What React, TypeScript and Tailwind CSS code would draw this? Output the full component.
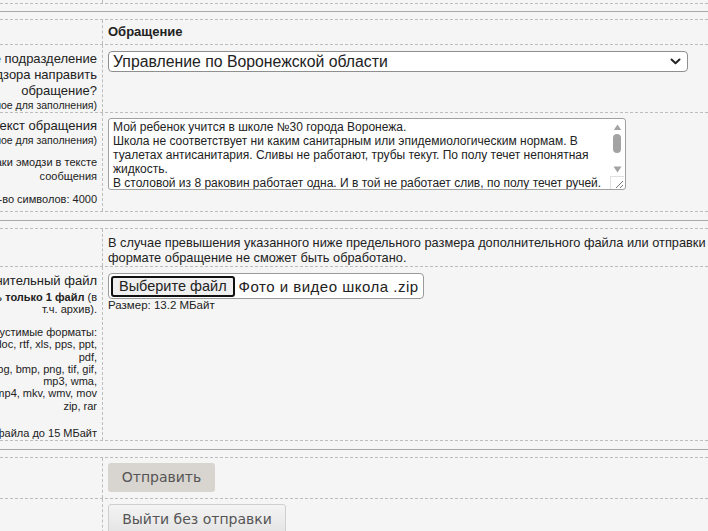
import React from 'react';

const dash = 'border-dashed border-[#bdbdbd]';

function Row({ left, children, className = '' }: { left?: React.ReactNode; children?: React.ReactNode; className?: string }) {
  return (
    <div className={`flex border-b ${dash} ${className}`}>
      <div className={`w-[103px] shrink-0 border-r ${dash} overflow-hidden flex flex-col items-end pr-[5px] text-[#222]`}>
        {left}
      </div>
      <div className="flex-1 pl-[5px] min-w-0">{children}</div>
    </div>
  );
}

function Line({ children, className = '' }: { children: React.ReactNode; className?: string }) {
  return <div className={`whitespace-nowrap ${className}`}>{children}</div>;
}

function Separator({ tall }: { tall?: boolean }) {
  return (
    <div className={`${tall ? 'h-[16px]' : 'h-[15px]'} flex items-center`}>
      <div className="h-px w-full bg-[#a8a8a8]" />
    </div>
  );
}

export default function App() {
  return (
    <div className="w-[708px] h-[531px] overflow-hidden bg-[#f5f5f5] font-['Liberation_Sans',Arial,sans-serif] text-[#222]">
      <Row className="h-[4px]" />
      <Separator />

      <div className={`border-t ${dash}`}>
        <Row className="h-[25px]">
          <div className="pt-[4px] text-[13px] font-bold leading-[15px]">Обращение</div>
        </Row>

        <Row className="h-[68px]" left={
          <div className="pt-[6px] flex flex-col items-end">
            <Line className="text-[13px] leading-[16px]">В какое подразделение</Line>
            <Line className="text-[13px] leading-[16px]">Роспотребнадзора направить</Line>
            <Line className="text-[13px] leading-[16px]">обращение?</Line>
            <Line className="text-[10.5px] leading-[12px]">(обязательное для заполнения)</Line>
          </div>
        }>
          <div className="pt-[6px]">
            <div className="w-[580px] h-[21px] rounded-[4px] border border-[#8f8f8f] bg-white flex items-center justify-between pl-[4px] pr-[6px]">
              <span className="text-[15.8px] leading-[17px]">Управление по Воронежской области</span>
              <svg width="11" height="7" viewBox="0 0 11 7" fill="none">
                <path d="M1.5 1.5 L5.5 5.2 L9.5 1.5" stroke="#222" strokeWidth="2" strokeLinecap="round" strokeLinejoin="round" />
              </svg>
            </div>
          </div>
        </Row>

        <Row className="h-[99px]" left={
          <div className="pt-[5px] flex flex-col items-end">
            <Line className="text-[13px] leading-[16px]">Текст обращения</Line>
            <Line className="text-[10.5px] leading-[12px]">(обязательное для заполнения)</Line>
            <Line className="text-[11px] leading-[14px] mt-[9px]">Не используйте знаки эмодзи в тексте</Line>
            <Line className="text-[11px] leading-[14px]">сообщения</Line>
            <Line className="text-[11px] leading-[14px] mt-[9px]">Максимальное кол-во символов: 4000</Line>
          </div>
        }>
          <div className="pt-[5px]">
            <div className="w-[518px] h-[72px] rounded-[3px] border border-[#a0a0a0] bg-white flex">
              <div className="flex-1 overflow-hidden pl-[4px] pt-[1px] text-[12px] leading-[14px] text-[#222]">
                Мой ребенок учится в школе №30 города Воронежа.<br />
                Школа не соответствует ни каким санитарным или эпидемиологическим нормам. В туалетах антисанитария. Сливы не работают, трубы текут. По полу течет непонятная жидкость.<br />
                В столовой из 8 раковин работает одна. И в той не работает слив, по полу течет ручей.
              </div>
              <div className="w-[16px] flex flex-col items-center pt-[5px]">
                <svg width="9" height="7" viewBox="0 0 9 7"><path d="M0.5 6.5 L4.5 0.5 L8.5 6.5 Z" fill="#a3a3a3" /></svg>
                <div className="mt-[4px] w-[8px] h-[20px] rounded-full bg-[#a3a3a3]" />
                <div className="mt-[13px]">
                  <svg width="9" height="7" viewBox="0 0 9 7"><path d="M0.5 0.5 L4.5 6.5 L8.5 0.5 Z" fill="#a3a3a3" /></svg>
                </div>
                <div className="mt-[3px] w-[14px] h-[13px] border-t border-l border-[#e0e0e0]">
                  <svg width="14" height="13" viewBox="0 0 14 13"><path d="M5 11 L12 4 M9 11 L12 8" stroke="#777" strokeWidth="1" /></svg>
                </div>
              </div>
            </div>
          </div>
        </Row>
      </div>

      <Separator tall />

      <div className={`border-t ${dash}`}>
        <Row className="h-[38px]">
          <div className="pt-[6px] text-[12.8px] leading-[15px] whitespace-nowrap">
            В случае превышения указанного ниже предельного размера дополнительного файла или отправки<br />
            формате обращение не сможет быть обработано.
          </div>
        </Row>

        <Row className="h-[174px]" left={
          <div className="pt-[6px] flex flex-col items-end">
            <Line className="text-[13px] leading-[16px]">Дополнительный файл</Line>
            <Line className="text-[11px] leading-[12px] mt-[2px]">Можно прикрепить <b>только 1 файл</b> (в</Line>
            <Line className="text-[11px] leading-[12px]">т.ч. архив).</Line>
            <div className="mt-[11px] flex flex-col items-end text-[11px] leading-[12.3px]">
              <Line>Допустимые форматы:</Line>
              <Line>txt, doc, rtf, xls, pps, ppt,</Line>
              <Line>pdf,</Line>
              <Line>jpg, bmp, png, tif, gif,</Line>
              <Line>mp3, wma,</Line>
              <Line>avi, mp4, mkv, wmv, mov</Line>
              <Line>zip, rar</Line>
            </div>
            <Line className="text-[11px] leading-[14px] mt-[14px]">Размер файла до 15 МБайт</Line>
          </div>
        }>
          <div className="pt-[6px]">
            <div className="w-[316px] h-[26px] rounded-[4px] border border-[#9a9a9a] bg-white flex items-center pl-[2px]">
              <div className="h-[21px] px-[6px] rounded-[3px] border-2 border-[#111] bg-[#efefef] flex items-center text-[14.5px] leading-[17px]">Выберите файл</div>
              <span className="ml-[4px] text-[15px] leading-[17px] tracking-[0.5px]">Фото и видео школа .zip</span>
            </div>
            <div className="text-[11.5px] leading-[13px]">Размер: 13.2 МБайт</div>
          </div>
        </Row>
      </div>

      <Separator tall />

      <div className={`border-t ${dash}`}>
        <Row className="h-[41px]">
          <div className="pt-[5px]">
            <div className="w-[107px] h-[29px] rounded-[3px] bg-[#d8d4cf] flex items-center justify-center font-['DejaVu_Sans',Verdana,sans-serif] text-[14px] text-[#555]">Отправить</div>
          </div>
        </Row>
        <Row className="h-[40px]">
          <div className="pt-[5px]">
            <div className="w-[178px] h-[30px] rounded-[3px] border border-[#cfcfcf] bg-gradient-to-b from-[#f4f4f4] to-[#e4e4e4] flex items-center justify-center font-['DejaVu_Sans',Verdana,sans-serif] text-[14px] text-[#555]">Выйти без отправки</div>
          </div>
        </Row>
      </div>
    </div>
  );
}
